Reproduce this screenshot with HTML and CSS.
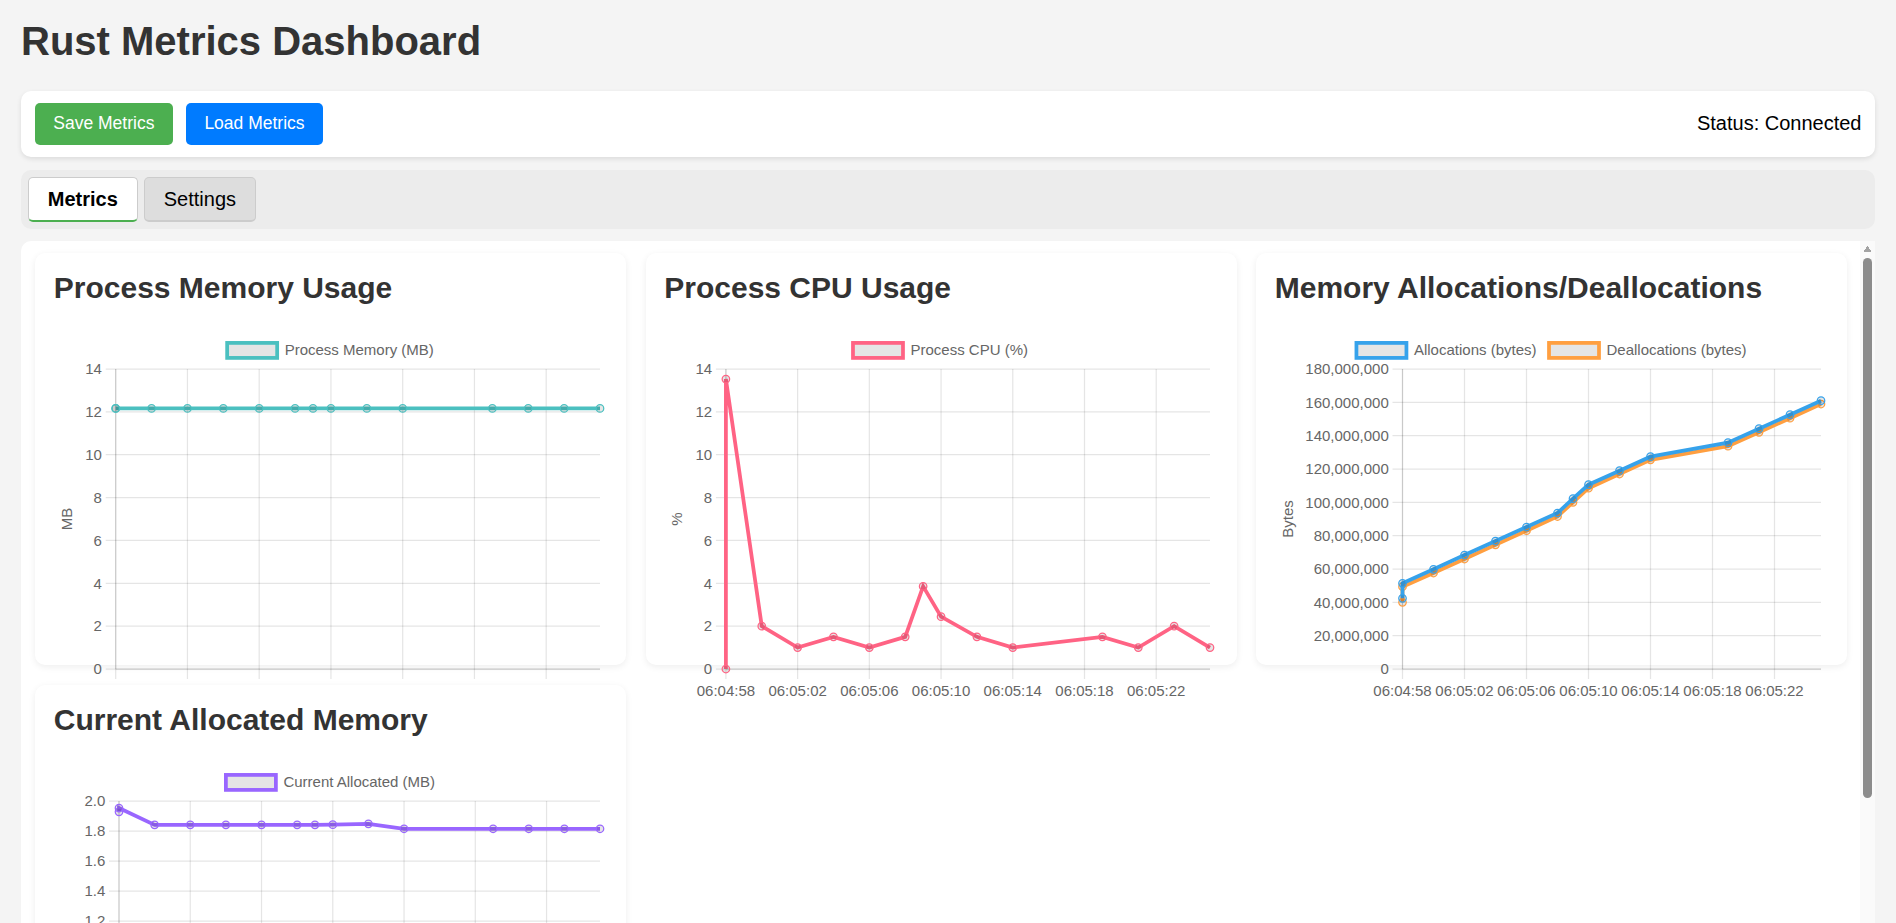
FILE: index.html
```html
<!DOCTYPE html>
<html lang="en">
<head>
<meta charset="utf-8">
<title>Rust Metrics Dashboard</title>
<link rel="stylesheet" href="styles.css">
</head>
<body>
<h1 class="page-title">Rust Metrics Dashboard</h1>
<div class="toolbar">
  <div class="actions">
    <button class="btn btn-save">Save Metrics</button>
    <button class="btn btn-load">Load Metrics</button>
  </div>
  <div class="status">Status: Connected</div>
</div>
<div class="tabs">
  <button class="tab active">Metrics</button>
  <button class="tab">Settings</button>
</div>
<div class="panel">
  <div class="panel-content">
    <div class="grid">
      <div class="card"><h2>Process Memory Usage</h2><svg class="chart" id="chart-mem" width="553" height="375"></svg></div>
      <div class="card"><h2>Process CPU Usage</h2><svg class="chart" id="chart-cpu" width="553" height="375"></svg></div>
      <div class="card"><h2>Memory Allocations/Deallocations</h2><svg class="chart" id="chart-alloc" width="553" height="375"></svg></div>
      <div class="card"><h2>Current Allocated Memory</h2><svg class="chart" id="chart-cur" width="553" height="375"></svg></div>
    </div>
  </div>
  <div class="scrollbar" aria-hidden="true">
    <div class="sb-up"></div>
    <div class="sb-thumb"></div>
  </div>
</div>
<script src="script.js"></script>
</body>
</html>
```
FILE: styles.css
```css
html, body {
  height: 100%;
}
body {
  margin: 0;
  padding: 18.5px 21px 0;
  background: #f4f4f4;
  font-family: "Liberation Sans", Arial, sans-serif;
  color: #000;
  overflow: hidden;
  box-sizing: border-box;
}
.page-title {
  font-size: 40px;
  font-weight: bold;
  color: #333;
  margin: 0 0 27.5px;
  line-height: normal;
}
.toolbar {
  display: flex;
  align-items: center;
  justify-content: space-between;
  background: #fff;
  border-radius: 10px;
  padding: 12px 13.5px;
  box-shadow: 0 2px 5px rgba(0, 0, 0, 0.1);
  margin-bottom: 13px;
}
.actions {
  display: flex;
  gap: 12.5px;
}
.btn {
  font-family: inherit;
  font-size: 17.5px;
  line-height: normal;
  padding: 10.3px 18.75px;
  border: none;
  border-radius: 5px;
  color: #fff;
  cursor: pointer;
}
.btn-save { background: #4caf50; }
.btn-load { background: #007bff; }
.status {
  font-size: 20px;
  color: #000;
}
.tabs {
  display: flex;
  gap: 6.5px;
  background: #ececec;
  border-radius: 10px;
  padding: 7px;
  margin-bottom: 12px;
}
.tab {
  font-family: inherit;
  font-size: 20px;
  line-height: normal;
  color: #000;
  padding: 10px 18.75px 9px;
  background: #ddd;
  border: 1px solid #ccc;
  border-bottom-width: 2px;
  border-radius: 5px;
}
.tab.active {
  background: #fff;
  font-weight: bold;
  border-bottom: 2px solid #4caf50;
}
.panel {
  display: flex;
  background: #fff;
  border-radius: 10px 0 0 0;
  height: 711px;
  overflow: hidden;
}
.panel-content {
  flex: 1;
  min-width: 0;
  padding: 12px 13px 12px 14px;
}
.scrollbar {
  flex: none;
  width: 15px;
  background: #fafafa;
  display: flex;
  flex-direction: column;
  align-items: center;
}
.sb-up {
  width: 15px;
  height: 16px;
  background: conic-gradient(from 144deg at 50% 0, #a3a3a3 0deg 72deg, transparent 72deg) center / 9px 6px no-repeat;
}
.sb-thumb {
  width: 9px;
  height: 540px;
  margin-top: 1px;
  background: #8c8c8c;
  border-radius: 5px;
}
.grid {
  display: grid;
  grid-template-columns: repeat(3, 1fr);
  gap: 19.5px;
}
.card {
  isolation: isolate;
  background: #fff;
  border-radius: 10px;
  padding: 18.75px;
  height: 412.5px;
  box-sizing: border-box;
  box-shadow: 0 2px 7px rgba(0, 0, 0, 0.07);
}
.card h2 {
  font-size: 30px;
  font-weight: bold;
  color: #333;
  margin: 0 0 24px;
  line-height: normal;
}
.chart {
  display: block;
  overflow: visible;
}
.chart text {
  font-family: "Liberation Sans", Arial, sans-serif;
  font-size: 15px;
  fill: #666;
}
.chart .grid-line {
  stroke: rgba(0, 0, 0, 0.1);
  stroke-width: 1.25;
}
.chart .axis {
  stroke: rgba(0, 0, 0, 0.12);
  stroke-width: 1.25;
}
.chart .line {
  fill: none;
  stroke-width: 3.75;
  stroke-linejoin: miter;
  stroke-miterlimit: 10;
}
.chart .pt {
  fill: rgba(0, 0, 0, 0.1);
  stroke-width: 1.25;
}
.chart .box {
  fill: rgba(0, 0, 0, 0.1);
  stroke-width: 3.75;
}
```
FILE: script.js
```js
(function () {
  var NS = 'http://www.w3.org/2000/svg';
  var T = [0, 0, 2, 4, 6, 8, 10, 11, 12, 14, 16, 21, 23, 25, 27];
  var W = 553, TOP = 40, BOT = 340, R = 546;
  var LABELS = ['06:04:58', '06:05:02', '06:05:06', '06:05:10', '06:05:14', '06:05:18', '06:05:22'];

  function el(tag, attrs, parent) {
    var e = document.createElementNS(NS, tag);
    for (var k in attrs) e.setAttribute(k, attrs[k]);
    if (parent) parent.appendChild(e);
    return e;
  }

  function draw(svg, cfg) {
    var L = cfg.L;
    var sx = function (t) { return L + (R - L) * t / 27; };
    var sy = function (v) { return BOT - (BOT - TOP) * (v - cfg.yMin) / (cfg.yMax - cfg.yMin); };
    var g = el('g', {}, svg);
    var n = Math.round((cfg.yMax - cfg.yMin) / cfg.yStep);
    var i, y, x, t;
    for (i = 0; i <= n; i++) {
      var v = cfg.yMin + i * cfg.yStep;
      y = sy(v);
      el('line', { x1: L - 10, x2: R, y1: y, y2: y, 'class': 'grid-line' }, g);
      t = el('text', { x: L - 13.75, y: y + 5.3, 'text-anchor': 'end' }, svg);
      t.textContent = cfg.fmt(v);
    }
    for (i = 0; i < 7; i++) {
      x = sx(4 * i);
      el('line', { x1: x, x2: x, y1: TOP, y2: BOT + 10, 'class': 'grid-line' }, g);
      t = el('text', { x: x, y: 367.3, 'text-anchor': 'middle' }, svg);
      t.textContent = LABELS[i];
    }
    el('line', { x1: L, x2: L, y1: TOP, y2: BOT, 'class': 'axis' }, svg);
    el('line', { x1: L, x2: R, y1: BOT, y2: BOT, 'class': 'axis' }, svg);

    t = el('text', { transform: 'translate(12 ' + (TOP + BOT) / 2 + ') rotate(-90)', 'text-anchor': 'middle', 'dominant-baseline': 'central' }, svg);
    t.textContent = cfg.title;

    for (i = cfg.data.length - 1; i >= 0; i--) {
      var d = cfg.data[i];
      var pts = d.values.map(function (val, j) { return [sx(T[j]), sy(val)]; });
      el('polyline', { points: pts.map(function (p) { return p[0].toFixed(2) + ',' + p[1].toFixed(2); }).join(' '), stroke: d.color, 'class': 'line' }, svg);
      pts.forEach(function (p) {
        el('circle', { cx: p[0], cy: p[1], r: 3.75, stroke: d.color, 'class': 'pt' }, svg);
      });
    }

    var lg = el('g', {}, svg);
    var items = [];
    var total = 0;
    cfg.data.forEach(function (d) {
      var tx = el('text', { y: 25.6 }, lg);
      tx.textContent = d.label;
      var w = tx.getComputedTextLength();
      items.push({ t: tx, w: w, d: d });
      total += 57.5 + w;
    });
    total += 12.5 * (items.length - 1);
    x = W / 2 - total / 2;
    items.forEach(function (it) {
      el('rect', { x: x, y: 13.9, width: 50, height: 15, stroke: it.d.color, 'class': 'box' }, lg);
      it.t.setAttribute('x', x + 57.5);
      x += 57.5 + it.w + 12.5;
    });
  }

  var intFmt = function (v) { return String(Math.round(v)); };
  var mem = T.map(function () { return 12.16; });

  draw(document.getElementById('chart-mem'), {
    L: 61.7, yMin: 0, yMax: 14, yStep: 2, fmt: intFmt, title: 'MB',
    data: [{ label: 'Process Memory (MB)', color: '#4bc0c0', values: mem }]
  });
  draw(document.getElementById('chart-cpu'), {
    L: 61.9, yMin: 0, yMax: 14, yStep: 2, fmt: intFmt, title: '%',
    data: [{ label: 'Process CPU (%)', color: '#ff6384', values: [0, 13.53, 2, 1, 1.5, 1, 1.5, 3.86, 2.44, 1.5, 1, 1.5, 1, 2, 1] }]
  });
  draw(document.getElementById('chart-alloc'), {
    L: 127.5, yMin: 0, yMax: 180000000, yStep: 20000000,
    fmt: function (v) { return Math.round(v).toLocaleString('en-US'); }, title: 'Bytes',
    data: [
      { label: 'Allocations (bytes)', color: '#36a2eb', values: [42.4, 51.4, 59.8, 68.4, 76.8, 85.2, 93.6, 102.2, 110.6, 119, 127.4, 135.8, 144.2, 152.6, 161].map(function (v) { return v * 1e6; }) },
      { label: 'Deallocations (bytes)', color: '#ff9f40', values: [40, 49.4, 57.6, 66, 74.5, 83, 91.5, 100, 108.5, 117, 125.5, 133.7, 142, 150.5, 159].map(function (v) { return v * 1e6; }) }
    ]
  });
  draw(document.getElementById('chart-cur'), {
    L: 65, yMin: 0, yMax: 2, yStep: 0.2, fmt: function (v) { return v.toFixed(1); }, title: 'MB',
    data: [{ label: 'Current Allocated (MB)', color: '#9966ff', values: [1.928, 1.953, 1.841, 1.841, 1.841, 1.841, 1.841, 1.841, 1.842, 1.848, 1.815, 1.815, 1.815, 1.815, 1.815] }]
  });
})();
```
